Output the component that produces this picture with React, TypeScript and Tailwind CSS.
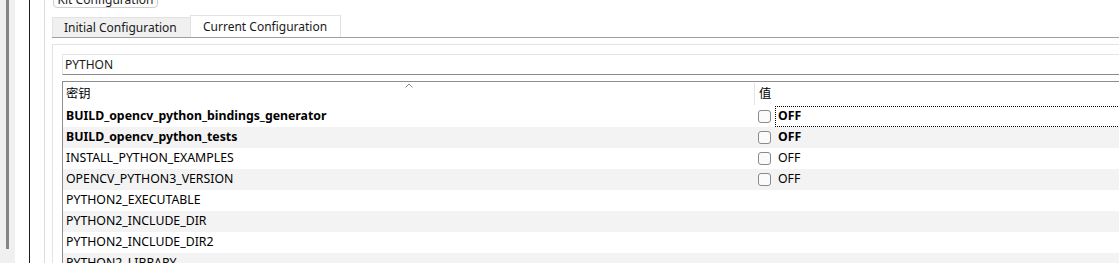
import React from "react";

const rows = [
  { key: "BUILD_opencv_python_bindings_generator", value: "OFF", bold: true, focus: true },
  { key: "BUILD_opencv_python_tests", value: "OFF", bold: true },
  { key: "INSTALL_PYTHON_EXAMPLES", value: "OFF" },
  { key: "OPENCV_PYTHON3_VERSION", value: "OFF" },
  { key: "PYTHON2_EXECUTABLE" },
  { key: "PYTHON2_INCLUDE_DIR" },
  { key: "PYTHON2_INCLUDE_DIR2" },
  { key: "PYTHON2_LIBRARY" },
];

type Row = { key: string; value?: string; bold?: boolean; focus?: boolean };

function Checkbox() {
  return <div className="w-[13px] h-[13px] rounded-[3px] border border-[#8a8a8a] bg-[#fbfbfb] shrink-0" />;
}

function TableRow({ row, odd }: { row: Row; odd: boolean }) {
  return (
    <div className={`flex h-[21px] items-center ${odd ? "bg-[#f3f3f3]" : "bg-white"}`}>
      <div className={`w-[691px] shrink-0 pl-[3px] ${row.bold ? "font-bold" : ""}`}>{row.key}</div>
      {row.value && (
        <div className="flex items-center h-full pl-[4px] flex-1">
          <Checkbox />
          <div
            className={`ml-[4px] h-full flex items-center pl-[2px] flex-1 ${row.bold ? "font-bold" : ""} ${
              row.focus ? "border border-dotted border-black" : "border border-transparent"
            }`}
          >
            {row.value}
          </div>
        </div>
      )}
    </div>
  );
}

export default function App() {
  return (
    <div
      className="w-[1119px] h-[263px] overflow-hidden flex bg-white text-[12px] text-black"
      style={{ fontFamily: '"Noto Sans", "Noto Sans CJK SC", sans-serif' }}
    >
      {/* left strip with scrollbar */}
      <div className="w-[15px] shrink-0 bg-[#f0f0f0] pl-[6px]">
        <div className="w-[3px] h-[249px] bg-[#858585]" />
      </div>
      <div className="w-[15px] shrink-0 border-r border-[#1e1e1e]" />
      <div className="w-[15px] shrink-0 border-r border-[#dcdcdc]" />
      <div className="w-[7px] shrink-0" />

      {/* main column */}
      <div className="w-[1300px] shrink-0 flex flex-col">
        <div className="ml-[1px] mt-[-12px] w-[105px] h-[20px] shrink-0 rounded-b-[4px] border border-[#cfcfcf] bg-[#fdfdfd] flex items-end justify-center leading-[14px] text-[#1a1a1a] overflow-hidden">
          Kit Configuration
        </div>

        {/* tabs */}
        <div className="flex items-end mt-[7px] h-[22px] shrink-0">
          <div className="w-[138px] h-[20px] bg-[#f0f0f0] border-t border-l border-[#e2e2e2] pl-[11px] flex items-center text-[#1a1a1a]">
            Initial Configuration
          </div>
          <div className="w-[151px] h-[22px] bg-white border-t border-l border-r border-[#e2e2e2] pl-[12px] flex items-center text-[#1a1a1a]">
            Current Configuration
          </div>
        </div>
        <div className="h-px bg-[#a0a0a0] shrink-0" />

        {/* pane */}
        <div className="mt-[6px] border-t border-l border-[#e3e3e3] pl-[9px] pt-[9px] flex-1">
          <div className="h-[21px] border border-[#e5e5e5] border-b-[#8a8a8a] flex items-center pl-[2px] text-[#1a1a1a]">
            PYTHON
          </div>

          <div className="mt-[6px] border-t border-l border-[#8f8f8f] text-[12.3px]">
            <div className="relative flex h-[24px] items-center bg-white">
              <div className="w-[691px] shrink-0 pl-[3px] pt-[1px]">密钥</div>
              <div className="h-[22px] border-l border-[#e5e5e5] pl-[4px] flex items-center">值</div>
              <svg
                className="absolute left-[342px] top-[1px]"
                width="8"
                height="5"
                viewBox="0 0 8 5"
              >
                <path d="M0.5 4.5 L4 1 L7.5 4.5" fill="none" stroke="#8a8a8a" strokeWidth="1" />
              </svg>
            </div>
            {rows.map((r, i) => (
              <TableRow key={r.key} row={r} odd={i % 2 === 1} />
            ))}
          </div>
        </div>
      </div>
    </div>
  );
}
